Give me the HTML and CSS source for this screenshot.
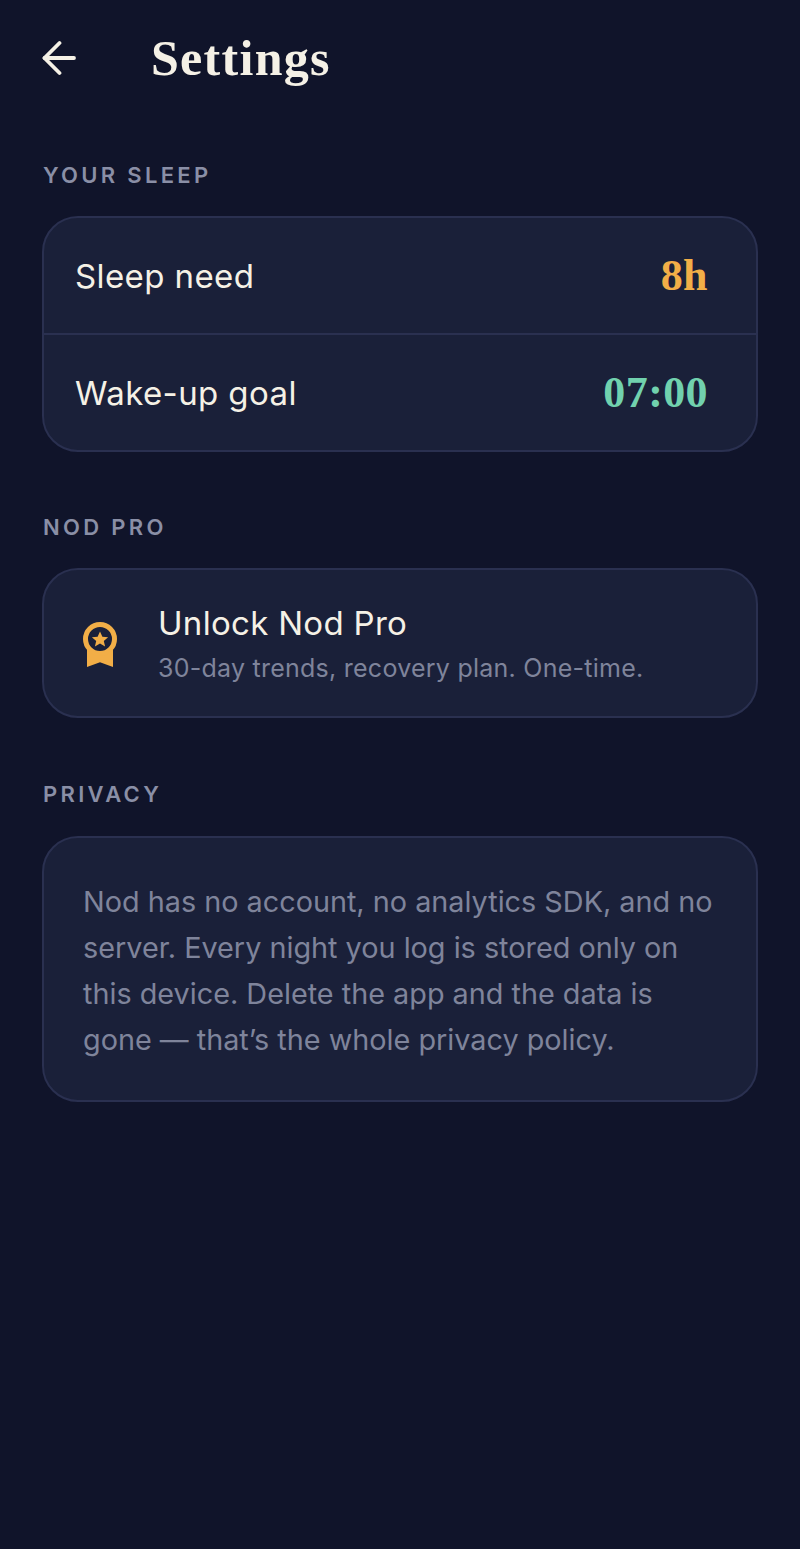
FILE: index.html
```html
<!DOCTYPE html>
<html lang="en">
<head>
<meta charset="utf-8">
<title>Settings</title>
<link rel="stylesheet" href="styles.css">
</head>
<body>
<main class="screen">
  <header class="header">
    <svg class="back" width="36" height="36" viewBox="0 0 36 36" fill="none" stroke="#f5f1e6" stroke-width="3.800" stroke-linecap="round" stroke-linejoin="round"><path d="M32 18H2.500"/><path d="M17.500 3 2.500 18l15 15"/></svg>
    <h1 class="title">Settings</h1>
  </header>

  <h2 class="label label-first">YOUR SLEEP</h2>
  <section class="card">
    <div class="row row-top"><span class="row-name">Sleep need</span><span class="value amber">8h</span></div>
    <div class="row row-bottom"><span class="row-name">Wake-up goal</span><span class="value mint">07:00</span></div>
  </section>

  <h2 class="label">NOD PRO</h2>
  <section class="card pro">
    <svg class="medal" width="34" height="46" viewBox="0 0 34 46"><path d="M4 25V45l13-4.800L30 45V25z" fill="#f2ae47"/><circle cx="17" cy="17" r="14.500" fill="#1a2039" stroke="#f2ae47" stroke-width="5"/><path d="M17 9.500l2.400 5.200 5.700.6-4.300 3.700 1.300 5.600L17 21.600l-5.100 3 1.300-5.600-4.300-3.700 5.700-.6z" fill="#f2ae47"/></svg>
    <div class="pro-text">
      <div class="pro-name">Unlock Nod Pro</div>
      <div class="pro-sub">30-day trends, recovery plan. One-time.</div>
    </div>
  </section>

  <h2 class="label label-privacy">PRIVACY</h2>
  <section class="card privacy">
    <p class="privacy-text">Nod has no account, no analytics SDK, and no<br>server. Every night you log is stored only on<br>this device. Delete the app and the data is<br>gone — that’s the whole privacy policy.</p>
  </section>
</main>
</body>
</html>
```
FILE: styles.css
```css
* { box-sizing: border-box; }
html, body { margin: 0; padding: 0; }
body {
  background: #10142a;
  color: #f5f1e6;
  font-family: Inter, "Noto Sans", sans-serif;
}
.screen {
  min-height: 1549px;
  padding: 0 42px;
  display: flex;
  flex-direction: column;
}
.header {
  display: flex;
  align-items: center;
  height: 116px;
  margin-bottom: 2px;
}
.back { flex: none; margin-right: 73px; }
.title {
  margin: 0;
  font-family: "Liberation Serif", serif;
  font-weight: 700;
  font-size: 50px;
  line-height: 56px;
  letter-spacing: 1.300px;
  color: #f5f1e6;
}
.label {
  margin: 61px 0 0;
  height: 55px;
  padding-left: 1px;
  font-size: 22px;
  line-height: 28px;
  font-weight: 600;
  letter-spacing: 3.300px;
  color: #8a8fa6;
}
.label-first { margin-top: 43px; }
.label-privacy { margin-top: 62px; height: 56px; }
.card {
  background: #1a2039;
  border: 2px solid #2a3050;
  border-radius: 36px;
}
.row {
  display: flex;
  align-items: center;
  justify-content: space-between;
  padding: 0 48px 0 31px;
}
.row-top { height: 117px; border-bottom: 2px solid #2a3050; }
.row-bottom { height: 115px; }
.row-name { font-size: 33px; letter-spacing: .400px; color: #f5f1e6; }
.value {
  font-family: "Liberation Serif", serif;
  font-weight: 700;
  font-size: 44px;
  line-height: 50px;
  letter-spacing: .400px;
}
.amber { color: #f2ae47; }
.mint { color: #71d1ae; }
.pro {
  height: 150px;
  display: flex;
  align-items: center;
  padding-left: 39px;
}
.medal { flex: none; margin: 4px 41px 0 0; }
.pro-text { display: flex; flex-direction: column; gap: 9px; }
.pro-name { font-size: 33px; letter-spacing: .300px; line-height: 40px; color: #f5f1e6; }
.pro-sub { font-size: 25px; letter-spacing: .250px; line-height: 32px; color: #7f849b; }
.privacy { height: 266px; padding: 41px 39px; }
.privacy-text {
  margin: 0;
  font-size: 28.800px;
  line-height: 46px;
  color: #7f849b;
  white-space: nowrap;
}
```
